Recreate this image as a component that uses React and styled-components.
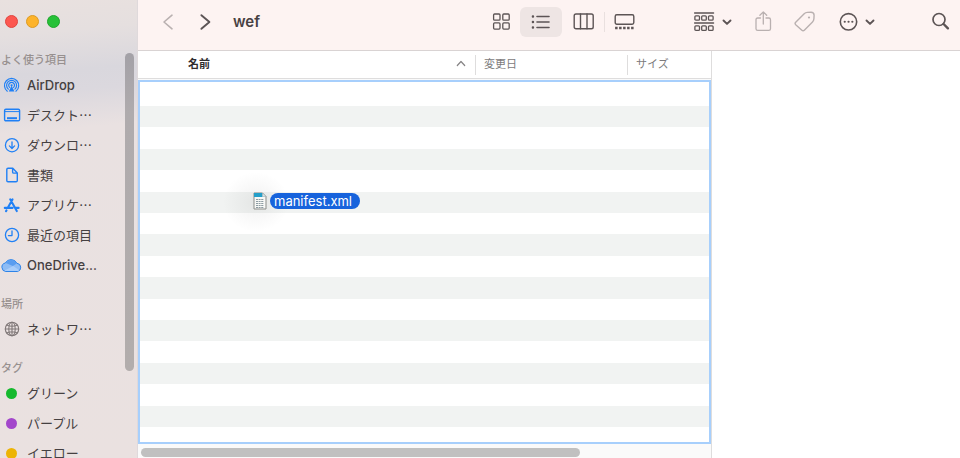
import React from "react";
import styled, { createGlobalStyle } from "styled-components";

const GlobalStyle = createGlobalStyle`
  * { box-sizing: border-box; }
  body {
    margin: 0;
    background: #fff;
    color: #454041;
    font-family: Inter, "Noto Sans CJK JP", sans-serif;
    font-size: 13px;
  }
  button { font: inherit; color: inherit; }
`;

const Window = styled.div`
  display: grid;
  grid-template-columns: 138px minmax(0, 1fr);
  height: 100vh;
  overflow: hidden;
`;

const Sidebar = styled.aside`
  display: flex;
  flex-direction: column;
  min-height: 0;
  overflow: hidden;
  border-right: 1px solid #dfd9db;
  background: linear-gradient(175deg, #e9e1df 0, #e5dfdf 36px, #d9d7dd 76px, #dbd8de 96px, #e9e1e1 134px, #eae1e0 100%);
`;

const WindowControls = styled.div`
  display: flex;
  flex: none;
  gap: 8px;
  height: 50px;
  padding: 15px 5px 0;
`;

const ControlDot = styled.button`
  width: 13px;
  height: 13px;
  padding: 0;
  border: 1px solid ${(p) => p.$edge};
  border-radius: 50%;
  background: ${(p) => p.$fill};
`;

const SidebarBody = styled.div`
  display: flex;
  justify-content: space-between;
  min-height: 0;
`;

const SidebarNav = styled.nav`
  width: 104px;
`;

const SectionTitle = styled.h2`
  height: 20px;
  margin: ${(p) => (p.$first ? 0 : 14)}px 0 0 1px;
  color: #97908f;
  font-size: 11px;
  font-weight: 500;
  line-height: 20px;
`;

const Places = styled.ul`
  margin: 0;
  padding: 0;
  list-style: none;
`;

const PlaceLink = styled.a`
  display: flex;
  align-items: center;
  gap: 5px;
  height: 30px;
  padding-left: 1px;
  color: #454041;
  line-height: 20px;
  text-decoration: none;
  white-space: nowrap;
  svg { flex: none; }
`;

const TagDot = styled.span`
  width: 11px;
  height: 11px;
  margin: 0 5px;
  border-radius: 50%;
  background: ${(p) => p.$color};
`;

const SidebarScrollbar = styled.div`
  flex: none;
  width: 9px;
  height: 318px;
  margin: 3px 3px 0 0;
  border-radius: 5px;
  background: linear-gradient(#a3a1a7, #afabad 60px, #b2adac);
`;

const Main = styled.main`
  display: grid;
  grid-template-rows: 51px minmax(0, 1fr);
  min-width: 0;
`;

const Toolbar = styled.header`
  display: flex;
  align-items: center;
  justify-content: space-between;
  padding: 0 8px 6px 24px;
  border-bottom: 1px solid #d9d3d3;
  background: #fdf3f2;
  color: #5c5455;
`;

const ToolGroup = styled.div`
  display: flex;
  align-items: center;
  gap: ${(p) => p.$gap || 0}px;
`;

const ToolButton = styled.button`
  display: flex;
  align-items: center;
  justify-content: center;
  height: 30px;
  padding: 0;
  border: 0;
  background: none;
  color: ${(p) => (p.$dim ? "#b9b0b0" : "#5c5455")};
`;

const ActiveToolButton = styled(ToolButton)`
  width: 42px;
  border-radius: 6px;
  background: #eee5e4;
`;

const Title = styled.h1`
  margin: 0;
  color: #474142;
  font-size: 15px;
  font-weight: 600;
  line-height: 20px;
`;

const Divider = styled.span`
  width: 1px;
  height: 20px;
  background: #e9e0df;
`;

const Content = styled.div`
  display: grid;
  grid-template-columns: minmax(0, 574fr) minmax(0, 248fr);
  min-height: 0;
`;

const ListPane = styled.section`
  display: grid;
  grid-template-rows: 29px minmax(0, 1fr) 14px;
  border-right: 1px solid #dedddd;
  background: #fafafa;
`;

const Columns = styled.div`
  display: grid;
  grid-template-columns: minmax(0, 1fr) 152px 84px;
  align-items: center;
  height: 28px;
  border-bottom: 1px solid #dedddd;
  background: #fff;
`;

const ColumnButton = styled.button`
  display: flex;
  align-items: center;
  justify-content: space-between;
  height: 20px;
  padding: 0 9px 3px ${(p) => (p.$sorted ? 50 : 8)}px;
  border: 0;
  border-left: ${(p) => (p.$sorted ? "0" : "1px solid #dedddd")};
  background: none;
  color: ${(p) => (p.$sorted ? "#302d2e" : "#7d7b7c")};
  font-size: 11px;
  font-weight: ${(p) => (p.$sorted ? 700 : 400)};
`;

const DropArea = styled.div`
  position: relative;
  display: grid;
  grid-template-rows: 24px repeat(15, minmax(0, 1fr)) 15px;
  border: 2px solid #a7cffc;
  background: #fff;
`;

const Stripe = styled.div`
  background: ${(p) => (p.$shaded ? "#f1f3f2" : "#fff")};
`;

const DraggedFile = styled.div`
  position: absolute;
  top: 110px;
  left: 113px;
  display: flex;
  align-items: center;
  gap: 3px;
`;

const DragShadow = styled.span`
  position: absolute;
  top: -20px;
  left: -30px;
  width: 66px;
  height: 60px;
  background: radial-gradient(closest-side, rgba(60, 60, 60, 0.07), transparent);
`;

const FileIcon = styled.svg`
  position: relative;
`;

const FileName = styled.span`
  position: relative;
  height: 16px;
  padding: 0 8px 0 4px;
  border-radius: 8px;
  background: #1763dc;
  color: #fff;
  line-height: 16px;
`;

const ScrollTrack = styled.div`
  padding: 4px 0 0 3px;
`;

const ScrollThumb = styled.div`
  width: 77%;
  height: 9px;
  border-radius: 5px;
  background: #c0c0c0;
`;

const PreviewPane = styled.section`
  background: #fff;
`;

const stroke = { fill: "none", stroke: "currentColor", strokeWidth: 1.4, strokeLinecap: "round", strokeLinejoin: "round" };
const blue = { ...stroke, stroke: "#2080f5" };

const placeIcons = {
  airdrop: (
    <svg width="21" height="20" viewBox="0 0 21 20" {...blue} strokeWidth="1.2">
      <path d="M6.3 16.2a7.1 7.1 0 1 1 8.6 0" />
      <path d="M7.3 14.1a5 5 0 1 1 6.6 0" />
      <path d="M8.6 12.4a2.9 2.9 0 1 1 4 0" />
      <path d="M10.6 10.4 7.8 16.6h5.6z" fill="#2080f5" stroke="none" />
      <circle cx="10.6" cy="10.3" r="1.1" fill="#2080f5" stroke="none" />
    </svg>
  ),
  desktop: (
    <svg width="21" height="20" viewBox="0 0 21 20" {...blue}>
      <rect x="3.6" y="4.2" width="15" height="11.6" rx="1.3" />
      <path d="M4 6.600h14.200" strokeWidth="1" />
      <path d="M6 13.200h10" strokeWidth="2" strokeLinecap="butt" />
    </svg>
  ),
  download: (
    <svg width="21" height="20" viewBox="0 0 21 20" {...blue} strokeWidth="1.3">
      <circle cx="11" cy="10.2" r="6.6" />
      <path d="M11 6.8v6.6M8.4 10.9l2.6 2.6 2.6-2.6" />
    </svg>
  ),
  document: (
    <svg width="21" height="20" viewBox="0 0 21 20" {...blue}>
      <path d="M7 3.300h4.800l4.500 4.600v7.600q0 1.200-1.200 1.200H7q-1.200 0-1.200-1.200v-11q0-1.200 1.200-1.200zM11.600 3.600v3.300q0 1.200 1.200 1.200H16" />
    </svg>
  ),
  apps: (
    <svg width="21" height="20" viewBox="0 0 21 20" {...blue} strokeWidth="2.1">
      <path d="M11.5 4.4 6.8 12.8M5.5 15.4l-.5.8M9.2 4.3l6.6 11.8M3.8 12.9h7.7M15 12.9h2.6" />
    </svg>
  ),
  clock: (
    <svg width="21" height="20" viewBox="0 0 21 20" {...blue} strokeWidth="1.3">
      <circle cx="11" cy="10" r="6.6" />
      <path d="M11 6v4.600H7.400" />
    </svg>
  ),
  cloud: (
    <svg width="21" height="20" viewBox="0 0 21 20">
      <path d="M5 16.500a4.300 4.300 0 0 1-.7-8.500A6.600 6.600 0 0 1 16 8.300a4.200 4.200 0 0 1 .7 8.200z" fill="#8ebcf5" stroke="#2d83e8" />
      <path d="M4.800 8a6.300 6.300 0 0 1 11 .5L11.800 11z" fill="#5a9df0" />
      <path d="m3.600 15.400 8.600-4.500 6 4.300q-.6.800-1.800.800H5.200q-1 0-1.600-.6z" fill="#a9cdfa" />
    </svg>
  ),
  network: (
    <svg width="21" height="20" viewBox="0 0 21 20" {...stroke} stroke="#807878" strokeWidth="1.100">
      <circle cx="11" cy="10" r="6.700" />
      <ellipse cx="11" cy="10" rx="3.200" ry="6.700" />
      <path d="M4.300 10h13.400M11 3.300v13.400M5.700 6q5.300 2.600 10.600 0M5.700 14q5.300-2.600 10.600 0" />
    </svg>
  ),
};

const sections = [
  {
    title: "よく使う項目",
    items: [
      { label: "AirDrop", icon: "airdrop" },
      { label: "デスクト…", icon: "desktop" },
      { label: "ダウンロ…", icon: "download" },
      { label: "書類", icon: "document" },
      { label: "アプリケ…", icon: "apps" },
      { label: "最近の項目", icon: "clock" },
      { label: "OneDrive...", icon: "cloud" },
    ],
  },
  { title: "場所", items: [{ label: "ネットワ…", icon: "network" }] },
  {
    title: "タグ",
    items: [
      { label: "グリーン", color: "#16b92e" },
      { label: "パープル", color: "#a347cb" },
      { label: "イエロー", color: "#edb405" },
    ],
  },
];

const Japanese = styled.span`
  font-family: "Noto Sans CJK JP", sans-serif;
`;

const Latin = styled.span`
  font-weight: 500;
`;

function Place({ label, icon, color }) {
  const ascii = /^[\x20-\x7e]+$/.test(label);
  return (
    <li>
      <PlaceLink href="#">
        {color ? <TagDot $color={color} /> : placeIcons[icon]}
        {ascii ? <Latin>{label}</Latin> : <Japanese>{label}</Japanese>}
      </PlaceLink>
    </li>
  );
}

function MenuChevron() {
  return (
    <svg width="10" height="10" viewBox="0 0 10 10" {...stroke} strokeWidth="1.900">
      <path d="m1.500 3.500 3.500 3.400 3.500-3.400" />
    </svg>
  );
}

const ColumnViews = styled.div`
  display: flex;
  align-items: center;
  gap: 9px;
  margin-left: 11px;
`;

function ViewGroup() {
  return (
    <ToolGroup>
      <ToolGroup $gap={9}>
        <ToolButton aria-label="アイコン表示">
          <svg width="19" height="20" viewBox="0 0 19 20" {...stroke} strokeWidth="1.300">
            <rect x="1.600" y="2" width="6.400" height="6.200" rx="1" />
            <rect x="10.800" y="2" width="6.400" height="6.200" rx="1" />
            <rect x="1.600" y="10.900" width="6.400" height="6.200" rx="1" />
            <rect x="10.800" y="10.900" width="6.400" height="6.200" rx="1" />
          </svg>
        </ToolButton>
        <ActiveToolButton aria-label="リスト表示" aria-pressed="true">
          <svg width="20" height="16" viewBox="0 0 20 16" {...stroke} strokeWidth="1.600">
            <path d="M6 2.500h12M6 8h12M6 13.500h12" />
            <path d="M1.900 2.500h.1M1.900 8h.1M1.900 13.500h.1" strokeWidth="2.400" />
          </svg>
        </ActiveToolButton>
      </ToolGroup>
      <ColumnViews>
        <ToolButton aria-label="カラム表示">
          <svg width="22" height="20" viewBox="0 0 22 20" {...stroke}>
            <rect x="1.200" y="2" width="19" height="14.800" rx="1.800" />
            <path d="M7.500 2v14.800M14 2v14.800" />
          </svg>
        </ToolButton>
        <Divider />
        <ToolButton aria-label="ギャラリー表示">
          <svg width="22" height="20" viewBox="0 0 22 20" {...stroke}>
            <rect x="1.200" y="2.800" width="18.600" height="9.400" rx="1.600" />
            <path d="M1.100 16h2.500M5.100 16h2.500M9.100 16h2.500M13.100 16h2.500M17.100 16h2.500" strokeWidth="2.400" strokeLinecap="butt" />
          </svg>
        </ToolButton>
      </ColumnViews>
    </ToolGroup>
  );
}

const MenuButton = styled(ToolButton)`
  gap: 7px;
`;

const ToolSections = styled.div`
  display: flex;
  align-items: center;
  gap: 57px;
`;

function ToolbarRow() {
  return (
    <Toolbar>
      <ToolGroup $gap={22}>
        <ToolGroup $gap={25}>
          <ToolButton $dim aria-label="戻る">
            <svg width="12" height="18" viewBox="0 0 12 18" {...stroke} strokeWidth="1.600">
              <path d="M10 2.200 2 9l8 6.800" />
            </svg>
          </ToolButton>
          <ToolButton aria-label="進む">
            <svg width="12" height="18" viewBox="0 0 12 18" {...stroke} strokeWidth="1.900">
              <path d="m2.400 2.200 8 6.800-8 6.800" />
            </svg>
          </ToolButton>
        </ToolGroup>
        <Title>wef</Title>
      </ToolGroup>
      <ToolSections>
        <ViewGroup />
        <ToolGroup $gap={22}>
          <MenuButton aria-label="グループ">
            <svg width="22" height="20" viewBox="0 0 22 20" {...stroke} strokeWidth="1.300">
              <path d="M1.600 1h19M1.600 11h19" />
              {[1.9, 8.7, 15.5].map((x) => (
                <React.Fragment key={x}>
                  <rect x={x} y="3.800" width="4.600" height="4.400" rx="1" />
                  <rect x={x} y="13.800" width="4.600" height="4.600" rx="1" />
                </React.Fragment>
              ))}
            </svg>
            <MenuChevron />
          </MenuButton>
          <ToolButton $dim aria-label="共有">
            <svg width="18" height="22" viewBox="0 0 18 22" {...stroke} strokeWidth="1.300">
              <path d="M6.500 7H3.700Q2 7 2 8.700v9q0 1.700 1.700 1.700h11.100q1.700 0 1.700-1.700v-9Q16.500 7 14.800 7H12M9.300 13V1M5.900 4.200l3.400-3.300 3.400 3.300" />
            </svg>
          </ToolButton>
          <ToolButton $dim aria-label="タグ">
            <svg width="22" height="22" viewBox="0 0 22 22" {...stroke}>
              <path d="M1.700 11.300 10.200 2.800q1.300-1.300 3.100-1.400l3.700-.2q3 0 3.100 3l-.2 3.600q-.1 1.800-1.400 3.100l-8.200 8.300q-1.200 1.200-2.400 0L1.700 13.700q-1.200-1.200 0-2.400z" />
              <circle cx="15" cy="6.500" r="1.100" fill="currentColor" stroke="none" />
            </svg>
          </ToolButton>
          <MenuButton aria-label="その他の操作">
            <svg width="20" height="20" viewBox="0 0 20 20" {...stroke} strokeWidth="1.600">
              <circle cx="10.500" cy="9.800" r="8.200" />
              <path d="M6.700 9.800h.1M10.500 9.800h.1M14.300 9.800h.1" strokeWidth="2.100" />
            </svg>
            <MenuChevron />
          </MenuButton>
        </ToolGroup>
        <ToolButton aria-label="検索">
          <svg width="20" height="20" viewBox="0 0 20 20" {...stroke} strokeWidth="1.700">
            <circle cx="7" cy="7.500" r="6" />
            <path d="m11.600 12 4.300 4.300" strokeWidth="2.400" />
          </svg>
        </ToolButton>
      </ToolSections>
    </Toolbar>
  );
}

export default function App() {
  return (
    <>
      <GlobalStyle />
      <Window>
        <Sidebar>
          <WindowControls>
            <ControlDot aria-label="閉じる" $fill="#fd5750" $edge="#e04640" />
            <ControlDot aria-label="しまう" $fill="#fdb32a" $edge="#dc9a23" />
            <ControlDot aria-label="拡大" $fill="#27c138" $edge="#20a62d" />
          </WindowControls>
          <SidebarBody>
            <SidebarNav>
              {sections.map((section, i) => (
                <React.Fragment key={section.title}>
                  <SectionTitle $first={i === 0}>{section.title}</SectionTitle>
                  <Places>
                    {section.items.map((item) => (
                      <Place key={item.label} {...item} />
                    ))}
                  </Places>
                </React.Fragment>
              ))}
            </SidebarNav>
            <SidebarScrollbar />
          </SidebarBody>
        </Sidebar>
        <Main>
          <ToolbarRow />
          <Content>
            <ListPane>
              <Columns>
                <ColumnButton $sorted>
                  名前
                  <svg width="10" height="8" viewBox="0 0 10 8" {...stroke} stroke="#858384" strokeWidth="1.200">
                    <path d="m1.300 6.500 3.700-4 3.700 4" />
                  </svg>
                </ColumnButton>
                <ColumnButton>変更日</ColumnButton>
                <ColumnButton>サイズ</ColumnButton>
              </Columns>
              <DropArea>
                {Array.from({ length: 17 }, (_, i) => (
                  <Stripe key={i} $shaded={i % 2 === 1} />
                ))}
                <DraggedFile>
                  <DragShadow />
                  <FileIcon width="14" height="18" viewBox="0 0 14 18">
                    <path d="M1 1h8.500L13 4.500V17H1z" fill="#f7f8f6" stroke="#8b8d8a" />
                    <path d="M1 1h8.500v4H1z" fill="#249fc9" />
                    <path d="M9.500 1v3.500H13z" fill="#d7e4e8" stroke="#93a4a8" strokeWidth=".5" />
                    <path d="M3 7.500h8M3 9.500h8M3 11.500h8M3 13.500h8M3 15.500h8" stroke="#8d9ca2" strokeDasharray="2 .6" />
                  </FileIcon>
                  <FileName>manifest.xml</FileName>
                </DraggedFile>
              </DropArea>
              <ScrollTrack>
                <ScrollThumb />
              </ScrollTrack>
            </ListPane>
            <PreviewPane />
          </Content>
        </Main>
      </Window>
    </>
  );
}
